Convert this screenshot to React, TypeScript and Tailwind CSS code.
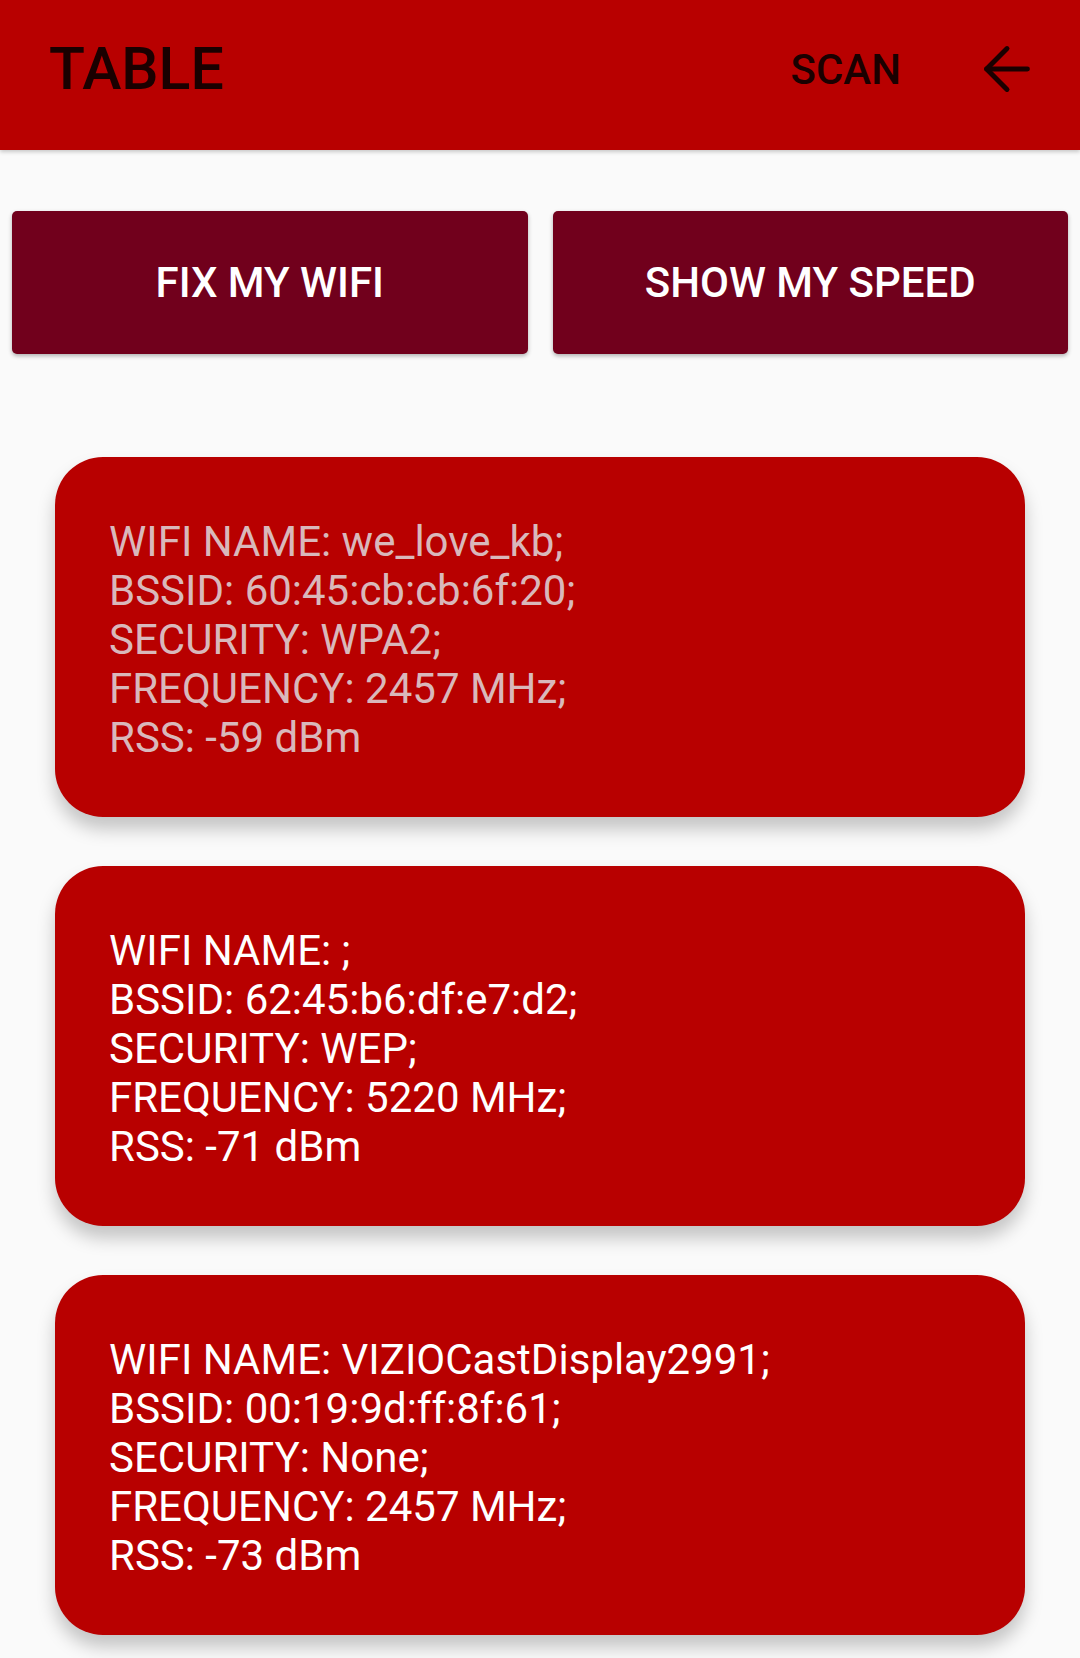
import { ArrowLeft } from "lucide-react";

const networks = [
  { name: "we_love_kb", bssid: "60:45:cb:cb:6f:20", security: "WPA2", freq: 2457, rss: -59, dim: true },
  { name: "", bssid: "62:45:b6:df:e7:d2", security: "WEP", freq: 5220, rss: -71, dim: false },
  { name: "VIZIOCastDisplay2991", bssid: "00:19:9d:ff:8f:61", security: "None", freq: 2457, rss: -73, dim: false },
];

export default function App() {
  return (
    <div className="w-[1080px] h-[1658px] overflow-hidden bg-[#fafafa] font-['Roboto',sans-serif]">
      {/* Toolbar */}
      <header className="h-[150px] bg-[#b80000] flex items-center pb-[12px] pl-[49px] pr-[38px] shadow-[0_2px_4px_rgba(0,0,0,0.2)] relative z-10">
        <h1 className="text-[59px] font-medium text-[#1a0000]">TABLE</h1>
        <div className="ml-auto flex items-center gap-[71px]">
          <span className="text-[42px] font-medium text-[#1a0000]">SCAN</span>
          <ArrowLeft className="w-[70px] h-[70px] text-[#1a0000]" strokeWidth={1.7} />
        </div>
      </header>

      {/* Action buttons */}
      <div className="grid grid-cols-2 gap-[25px] px-[12px] pt-[61px]">
        <button className="h-[143px] rounded-[5px] bg-[#71001c] text-white text-[42px] font-medium shadow-[0_2px_4px_rgba(0,0,0,0.3)]">
          FIX MY WIFI
        </button>
        <button className="h-[143px] rounded-[5px] bg-[#71001c] text-white text-[42px] font-medium shadow-[0_2px_4px_rgba(0,0,0,0.3)]">
          SHOW MY SPEED
        </button>
      </div>

      {/* Network cards */}
      <div className="flex flex-col gap-[49px] px-[55px] pt-[103px]">
        {networks.map((n) => (
          <div
            key={n.bssid}
            className="h-[360px] rounded-[48px] bg-[#b80000] flex items-center pl-[54px] shadow-[0_12px_18px_rgba(0,0,0,0.22)]"
          >
            <div className={`text-[42px] leading-[49px] pt-[4px] ${n.dim ? "text-[#d9b8bb]" : "text-white"}`}>
              <div>WIFI NAME: {n.name};</div>
              <div>BSSID: {n.bssid};</div>
              <div>SECURITY: {n.security};</div>
              <div>FREQUENCY: {n.freq} MHz;</div>
              <div>RSS: {n.rss} dBm</div>
            </div>
          </div>
        ))}
      </div>
    </div>
  );
}
